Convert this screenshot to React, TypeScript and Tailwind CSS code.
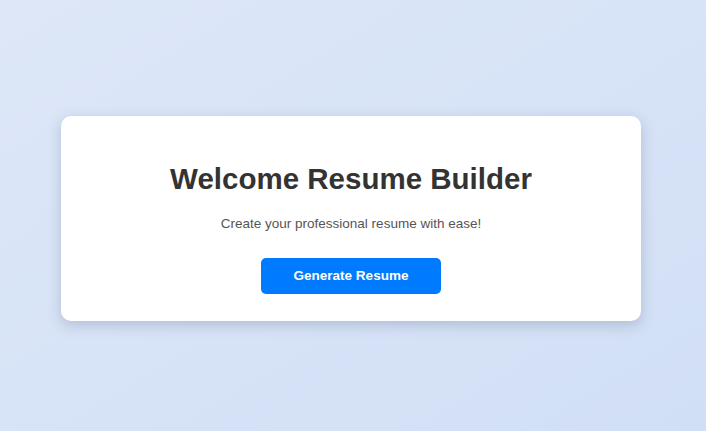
export default function App() {
  return (
    <div
      className="min-h-[431px] w-full flex items-center justify-center pr-1 pt-[6px] bg-gradient-to-br from-[#dde7f8] to-[#d1dff5]"
      style={{ fontFamily: '"Liberation Sans", Arial, sans-serif' }}
    >
      <div className="w-[580px] h-[205px] bg-white rounded-[10px] shadow-[0_4px_14px_rgba(60,80,120,0.25)] flex flex-col items-center pt-[46px]">
        <h1 className="text-[29.5px] font-bold text-[#333333] leading-[34px]">Welcome Resume Builder</h1>
        <p className="mt-[20px] text-[13.5px] text-[#555555] leading-[16px]">Create your professional resume with ease!</p>
        <button className="mt-[26px] w-[180px] h-[36px] rounded-[5px] bg-[#007bff] text-white text-[13.5px] font-bold">
          Generate Resume
        </button>
      </div>
    </div>
  );
}
